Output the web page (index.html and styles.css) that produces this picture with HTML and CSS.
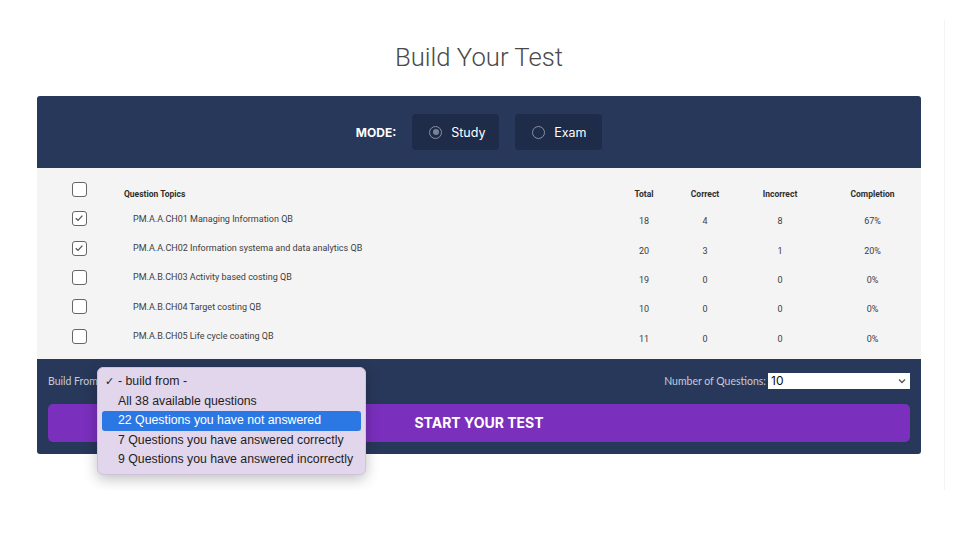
FILE: index.html
```html
<!DOCTYPE html>
<html lang="en">
<head>
    <meta charset="UTF-8">
    <meta name="viewport" content="width=device-width, initial-scale=1.0">
    <title>Build Your Test</title>
    <link rel="stylesheet" href="styles.css">
</head>
<body>
    <div class="page">
        <h1 class="title">Build Your Test</h1>
        <div class="card">
            <div class="mode-bar">
                <span class="mode-label">MODE:</span>
                <div class="mode-btn"><span class="radio on"></span>Study</div>
                <div class="mode-btn"><span class="radio"></span>Exam</div>
            </div>

            <table class="topics">
                <colgroup>
                    <col class="c-check">
                    <col class="c-topic">
                    <col class="c-total">
                    <col class="c-correct">
                    <col class="c-incorrect">
                    <col class="c-completion">
                </colgroup>
                <thead>
                    <tr>
                        <th><span class="box"></span></th>
                        <th class="left">Question Topics</th>
                        <th>Total</th>
                        <th>Correct</th>
                        <th>Incorrect</th>
                        <th>Completion</th>
                    </tr>
                </thead>
                <tbody>
                    <tr>
                        <td><span class="box checked"><svg viewBox="0 0 10 10"><path d="M2.3 5.2 4.2 7 7.8 3"/></svg></span></td>
                        <td class="left topic">PM.A.A.CH01 Managing Information QB</td>
                        <td class="num">18</td>
                        <td class="num">4</td>
                        <td class="num">8</td>
                        <td class="num">67%</td>
                    </tr>
                    <tr>
                        <td><span class="box checked"><svg viewBox="0 0 10 10"><path d="M2.3 5.2 4.2 7 7.8 3"/></svg></span></td>
                        <td class="left topic">PM.A.A.CH02 Information systema and data analytics QB</td>
                        <td class="num">20</td>
                        <td class="num">3</td>
                        <td class="num">1</td>
                        <td class="num">20%</td>
                    </tr>
                    <tr>
                        <td><span class="box"></span></td>
                        <td class="left topic">PM.A.B.CH03 Activity based costing QB</td>
                        <td class="num">19</td>
                        <td class="num">0</td>
                        <td class="num">0</td>
                        <td class="num">0%</td>
                    </tr>
                    <tr>
                        <td><span class="box"></span></td>
                        <td class="left topic">PM.A.B.CH04 Target costing QB</td>
                        <td class="num">10</td>
                        <td class="num">0</td>
                        <td class="num">0</td>
                        <td class="num">0%</td>
                    </tr>
                    <tr>
                        <td><span class="box"></span></td>
                        <td class="left topic">PM.A.B.CH05 Life cycle coating QB</td>
                        <td class="num">11</td>
                        <td class="num">0</td>
                        <td class="num">0</td>
                        <td class="num">0%</td>
                    </tr>
                </tbody>
            </table>

            <div class="footer">
                <div class="options">
                    <span class="field-label">Build From</span>
                    <span class="spacer"></span>
                    <span class="field-label">Number of Questions:</span>
                    <div class="fake-select">
                        <span>10</span>
                        <svg viewBox="0 0 10 10"><path d="M2 3.5 5 6.5 8 3.5"/></svg>
                    </div>
                </div>
                <button class="start">START YOUR TEST</button>
            </div>

            <ul class="dropdown">
                <li class="first"><span class="tick">✓</span>- build from -</li>
                <li>All 38 available questions</li>
                <li class="active">22 Questions you have not answered</li>
                <li>7 Questions you have answered correctly</li>
                <li>9 Questions you have answered incorrectly</li>
            </ul>
        </div>
    </div>
</body>
</html>
```

FILE: styles.css
```css
html, body{
    margin: 0;
    padding: 0;
    background-color: white;
}
body{
    font-family: Inter, "Liberation Sans", Arial, sans-serif;
}
.page{
    width: 945px;
    height: 470px;
    margin-top: 20px;
    border-right: 1px solid #f3f3f3;
    box-sizing: border-box;
    padding-top: 20px;
}
.title{
    width: 884px;
    margin: 0 0 22px 37px;
    text-align: center;
    font-family: Roboto, "Liberation Sans", sans-serif;
    font-weight: 300;
    font-size: 25.7px;
    line-height: 34px;
    color: #4a4a4a;
}
.card{
    position: relative;
    width: 884px;
    margin-left: 37px;
    border-radius: 3px;
    background-color: #f4f4f4;
}

/* mode bar */
.mode-bar{
    height: 72px;
    background-color: #28385a;
    border-radius: 3px 3px 0 0;
    display: flex;
    justify-content: center;
    align-items: center;
    gap: 16px;
}
.mode-label{
    color: white;
    font-weight: 700;
    font-size: 12px;
}
.mode-btn{
    display: flex;
    align-items: center;
    width: 87px;
    height: 36px;
    box-sizing: border-box;
    padding-left: 17px;
    background-color: #1f2c49;
    border-radius: 4px;
    color: white;
    font-size: 12.5px;
}
.radio{
    width: 11px;
    height: 11px;
    border: 1.5px solid #8690a6;
    border-radius: 50%;
    margin-right: 9px;
    position: relative;
}
.radio.on::after{
    content: "";
    position: absolute;
    left: 2.5px;
    top: 2.5px;
    width: 6px;
    height: 6px;
    border-radius: 50%;
    background-color: #7a8396;
}

/* topics table */
.topics{
    width: 884px;
    border-collapse: collapse;
    table-layout: fixed;
    margin-top: 11px;
    margin-bottom: 8px;
    color: #3d3d3d;
    font-family: Roboto, "Liberation Sans", sans-serif;
}
.c-check{ width: 87px; }
.c-topic{ width: 490px; }
.c-total{ width: 60px; }
.c-correct{ width: 62px; }
.c-incorrect{ width: 88px; }
.c-completion{ width: 97px; }
.topics tbody tr{
    height: 29.4px;
}
.topics thead tr{
    height: 25px;
}
.topics th, .topics td{
    padding: 0;
    text-align: center;
    font-size: 8.5px;
    line-height: 11px;
}
.topics th{
    font-weight: 700;
    color: #2e2e2e;
    padding-top: 5px;
}
.topics th:first-child, .topics td:first-child{
    text-align: left;
    padding-left: 35px;
}
.topics .left{
    text-align: left;
}
.topics .topic{
    padding-left: 9px;
    padding-top: 1px;
    font-size: 9px;
}
.topics .num{
    padding-top: 6px;
    font-size: 9px;
}
.box{
    display: block;
    width: 15px;
    height: 15px;
    box-sizing: border-box;
    border: 1.5px solid #666;
    border-radius: 3px;
    background-color: white;
}
.box svg{
    display: block;
    width: 12px;
    height: 12px;
    fill: none;
    stroke: #555;
    stroke-width: 1.1;
}
.topics th .box{
    margin-top: -9px;
}

/* footer */
.footer{
    background-color: #28385a;
    border-radius: 0 0 3px 3px;
    padding: 14px 11px 12px;
}
.options{
    display: flex;
    align-items: center;
    height: 16px;
    margin-bottom: 15px;
}
.field-label{
    color: #c6cbd6;
    font-size: 10.5px;
    font-family: Lato, "Liberation Sans", sans-serif;
    margin-right: 2px;
}
.spacer{
    flex: 1;
}
.fake-select{
    width: 142px;
    height: 16px;
    box-sizing: border-box;
    background-color: white;
    display: flex;
    align-items: center;
    justify-content: space-between;
    padding: 0 3px;
    font-size: 12px;
    color: #111;
}
.fake-select svg{
    width: 10px;
    height: 10px;
    fill: none;
    stroke: #555;
    stroke-width: 1.3;
}
.start{
    display: block;
    width: 100%;
    height: 38px;
    border: none;
    border-radius: 5px;
    background-color: #7a2fbd;
    color: white;
    font-family: Inter, "Liberation Sans", sans-serif;
    font-weight: 700;
    font-size: 14px;
}

/* open select menu */
.dropdown{
    position: absolute;
    left: 60px;
    top: 271px;
    width: 269px;
    margin: 0;
    padding: 4px;
    box-sizing: border-box;
    list-style: none;
    background-color: #e2d6ec;
    border: 1px solid #cfc3da;
    border-radius: 6px;
    box-shadow: 0 4px 14px rgba(0, 0, 0, 0.25);
    font-family: "Liberation Sans", Arial, sans-serif;
    font-size: 12.3px;
    color: #1e1e1e;
}
.dropdown li{
    height: 19.5px;
    line-height: 19.5px;
    padding-left: 16px;
    border-radius: 3px;
    position: relative;
}
.dropdown .tick{
    position: absolute;
    left: 3px;
    font-size: 11px;
}
.dropdown .active{
    background-color: #2b78e4;
    color: white;
}
```
